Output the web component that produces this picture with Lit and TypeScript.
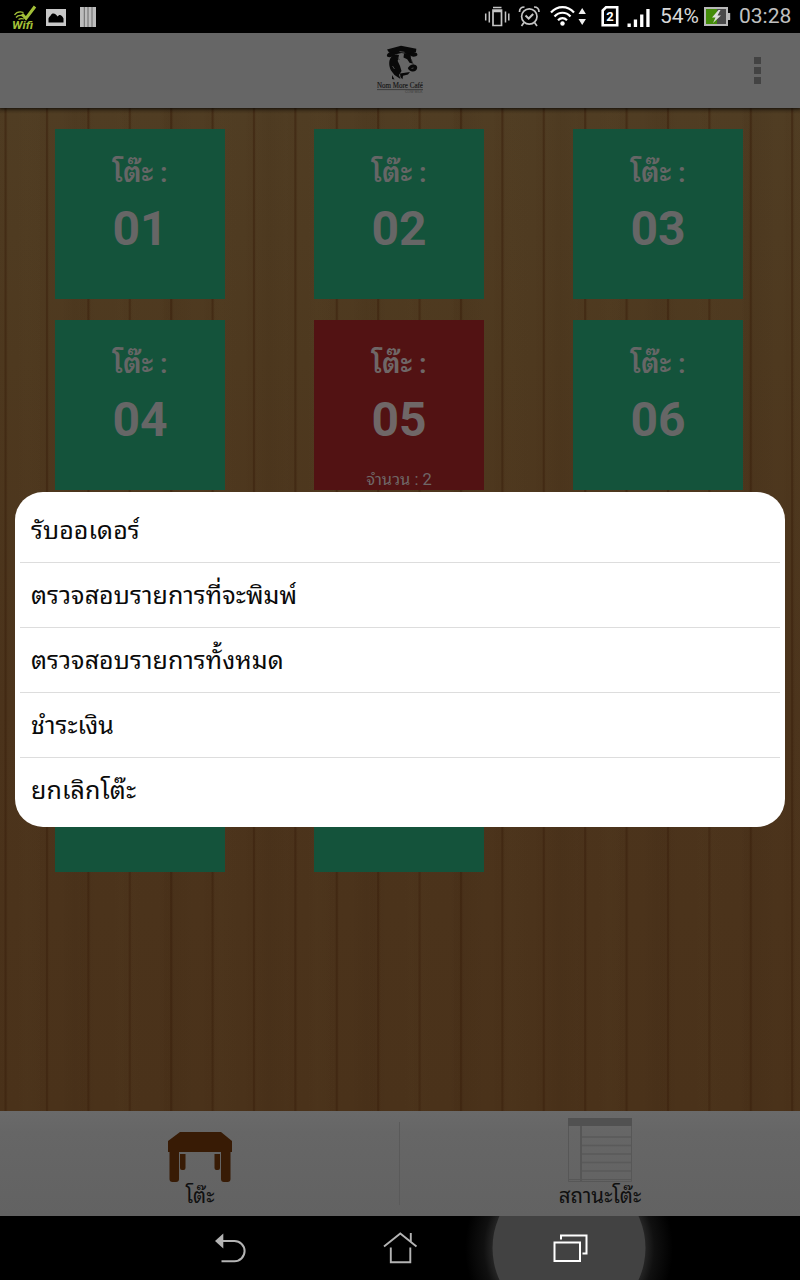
import { LitElement, html, css } from "lit";
import { customElement, property } from "lit/decorators.js";

const FONT = css`Roboto, "Noto Sans Thai Looped", "Noto Looped Thai", Loma, Garuda, Waree, Umpush, "Droid Sans Thai", "Noto Serif Thai", "Noto Sans", sans-serif`;

@customElement("status-bar")
class StatusBar extends LitElement {
  static styles = css`
    :host { display: block; height: 33px; background: #000; }
    .bar { display: flex; align-items: center; height: 33px; font-family: ${FONT}; }
    svg { display: block; flex: none; }
    .pct { width: 44px; font-size: 21px; line-height: 33px; color: #d8d8d8; white-space: nowrap; letter-spacing: -0.1px; }
    .clock { font-size: 21px; line-height: 33px; color: #c0c0c0; white-space: nowrap; }
  `;
  render() {
    return html`<div class="bar">
      <svg width="660" height="33" viewBox="0 0 660 33">
        <g stroke="#a3c038" fill="none">
          <path d="M22 14l4 4.500 9-12" stroke-width="3" />
          <path d="M14.500 15c2-3 6-3.500 9-2.500M16 17.500c2-2.500 5-2.500 7.500-1.500M18.500 19.500c2-1.500 4-1 5.500-.5" stroke-width="1.300" />
        </g>
        <text x="12" y="28.500" font-size="10.500" font-weight="700" font-style="italic" fill="#a3c038" textLength="21" lengthAdjust="spacingAndGlyphs">Wifi</text>
        <path fill="#c8c8c8" fill-rule="evenodd" d="M46 9h20v17H46zM48.500 22.500h15v-4c-1.500-3.500-4-5-6-2-1-2-4.500-5-6.500-1.500-1 1.500-2 2-2.500 3.500z" />
        <path fill="#bdbdbd" d="M80 7h16v20H80z" />
        <path stroke="#555" stroke-width=".8" d="M84.300 7v20M88 7v20M92 7v20" />
        <g fill="none" stroke="#c4c4c4" stroke-width="1.700">
          <path d="M493 10h8.500v15.500H493zM493 7.500h8.500M493.500 11.500h7.500" />
          <path d="M485.700 13.500v7M489.300 11.500v11M505.500 11.500v11M508.800 13.500v7" stroke-width="1.500" />
          <circle cx="529.300" cy="16.500" r="7.700" />
          <path d="M525.500 15.500l3.200 3 4.500-4.500" stroke-width="2" />
          <path d="M519.500 12c0-3 2-5 5-5M539 12c0-3-2-5-5-5M524 22.500l-2.500 3.500M534.500 22.500l2.500 3.500" />
        </g>
        <g fill="none" stroke="#fff" stroke-width="2.200">
          <path d="M551 12.500c6.500-7.200 16.500-7.200 23 0M554.500 16.500c4.500-5 11.500-5 16 0M558 20.300c2.800-2.800 6.200-2.800 9 0" />
        </g>
        <circle cx="562.500" cy="23.500" r="2.200" fill="#fff" />
        <path fill="#eee" d="M582.200 8l3.700 6h-7.400zM582.200 25l3.700-6h-7.400z" />
        <path fill="none" stroke="#fff" stroke-width="2.600" d="M606 7.300h11.200v18H602.700V10.500z" />
        <text x="606.300" y="21.300" font-size="13" font-weight="700" fill="#fff">2</text>
        <path fill="#fff" d="M627.500 23.500h3.300v3.500h-3.300zM633.800 19.500h3.300v7.500h-3.300zM640.100 14.500h3.300V27h-3.300zM646.300 9h3.300v18h-3.300z" />
      </svg>
      <span class="pct">54%</span>
      <svg width="35" height="33" viewBox="704 0 35 33">
        <path fill="#4a4a4a" d="M706 9h20v15h-20z" />
        <path fill="#448c0a" d="M706 9h11v15h-11z" />
        <path fill="none" stroke="#b8b8b8" stroke-width="2" d="M705 8h22v17h-22z" />
        <path fill="#b8b8b8" d="M728 13h2.200v7H728z" />
        <path fill="#ddd" d="M718.500 10l-6.500 7.500h3.500l-2.500 5.500 8-7.500h-3.500l3-5.500z" />
      </svg>
      <span class="clock">03:28</span>
    </div>`;
  }
}

@customElement("app-header")
class AppHeader extends LitElement {
  static styles = css`
    :host { display: grid; grid-template-columns: 1fr 60px 1fr; align-items: start; height: 75px; background: #666; box-shadow: 0 1px 3px rgba(0, 0, 0, 0.6); z-index: 1; }
    .logo { grid-column: 2; padding-top: 10px; overflow: visible; }
    .more { display: grid; gap: 3px; justify-self: end; padding: 24px 39px 0 0; }
    .more i { width: 7px; height: 7px; background: #434343; }
    svg { display: block; }
  `;
  render() {
    return html`
      <svg class="logo" width="60" height="55" viewBox="370 43 60 55">
        <g fill="#090909">
          <path d="M387 49.500l14-3.700 15.300 3-.3 3.200-6.500 2.500-8-1.500-6.500 1.500-6-2z" />
          <path d="M396 53l-5.500-.8c-3 .6-4.500 3-3 4.600 2 1 4.800.2 6.500-1z" />
          <path d="M408 53.500l6-1.300c3.500.3 4.500 2.800 2 4-2 .8-3.500.5-5-.2z" />
          <path d="M390.500 58c1.500-2.500 5-4.500 8.500-3l-1.300 6 2.300 5 1.500 5-2.500 4 1.500 4-6-4-3.500-4.500c-2-4-2.500-9-.5-12.500z" />
          <path d="M404 53.500l6.500.5.500 5 1.500 4.500-3-.8-2.300-3.500-3.700-1.700z" />
          <path d="M409.500 66c3.500-2.500 7.500-1.500 7.700 1.500 0 3-2.700 4.500-5.200 4-2-.4-3.700-1.700-4.200-3.500z" />
          <path d="M400 73.500l10-1.500-2 2.500-5 1.200-.5 3.500-2-2z" />
          <path d="M392 75l2.500 4.500-2.500-.5z" />
        </g>
        <path fill="none" stroke="#202020" stroke-width=".7" d="M397 57.500l2.500 2.500M411 59l2.500 6" />
        <path fill="none" stroke="#666" stroke-width=".7" d="M399.500 51.500l5 .8M411.500 68.500l2-.5M392.500 66l2 3" />
        <text x="377" y="88.300" font-family="Liberation Serif, serif" font-size="8.300" fill="#151515" stroke="#151515" stroke-width=".15" textLength="46" lengthAdjust="spacingAndGlyphs">Nom More Café</text>
        <path stroke="#2b2b2b" stroke-width=".7" d="M377 89.600h46" />
        <text x="405" y="93" font-family="Liberation Sans, sans-serif" font-size="3.500" fill="#3c3c3c">COW MILK</text>
      </svg>
      <div class="more"><i></i><i></i><i></i></div>`;
  }
}

@customElement("table-card")
class TableCard extends LitElement {
  @property() number = "";
  @property() count = "";
  @property({ type: Boolean, reflect: true }) busy = false;
  static styles = css`
    :host { display: flex; flex-direction: column; align-items: center; width: 170px; height: 170px; background: #14533b; color: #666; font-family: ${FONT}; font-weight: 700; }
    :host([busy]) { background: #521213; color: #6f6767; }
    .label { font-size: 28px; line-height: 34px; padding-top: 27px; white-space: nowrap; font-weight: 600; }
    .num { font-size: 48px; line-height: 56px; padding-top: 11px; }
    .count { font-size: 16.500px; font-weight: 400; line-height: 20px; margin-top: auto; white-space: nowrap; }
  `;
  render() {
    if (!this.number) return html``;
    return html`<div class="label">โต๊ะ :</div>
      <div class="num">${this.number}</div>
      ${this.count ? html`<div class="count">จำนวน : ${this.count}</div>` : ""}`;
  }
}

@customElement("action-menu")
class ActionMenu extends LitElement {
  static styles = css`
    :host { display: flex; flex-direction: column; box-sizing: border-box; height: 335px; background: #fff; border-radius: 28px; padding: 6px 5px 4px; font-family: ${FONT}; color: #0a0a0a; }
    .item { box-sizing: border-box; flex: none; height: 65px; padding: 15px 11px 0; font-size: 25px; line-height: 36px; letter-spacing: 0.1px; border-bottom: 1px solid #ddd; white-space: nowrap; }
    .item:last-child { border-bottom: 0; }
  `;
  items = ["รับออเดอร์", "ตรวจสอบรายการที่จะพิมพ์", "ตรวจสอบรายการทั้งหมด", "ชำระเงิน", "ยกเลิกโต๊ะ"];
  render() {
    return this.items.map((t) => html`<div class="item"><span>${t}</span></div>`);
  }
}

@customElement("tab-bar")
class TabBar extends LitElement {
  static styles = css`
    :host { display: grid; grid-template-columns: 1fr 1fr; height: 105px; background: linear-gradient(#6a6a6a, #666 20%, #626262); font-family: ${FONT}; color: #101010; }
    .tab { display: flex; flex-direction: column; align-items: center; padding-top: 7px; }
    .tab:first-child { background: linear-gradient(#5a5a5a, #5a5a5a) right 11px / 1px 83px no-repeat; }
    svg { display: block; }
    .name { font-size: 20.500px; line-height: 28px; white-space: nowrap; }
  `;
  render() {
    return html`
      <div class="tab">
        <svg width="64" height="64" viewBox="0 0 64 64" fill="#381b05">
          <path d="M12 14h41l11 9v11H0V23z" />
          <path d="M1.500 34h9.500v27q0 3-3 3H4.500q-3 0-3-3zM53 34h9.500v27q0 3-3 3H56q-3 0-3-3z" />
          <path d="M12 36h5.500v14q0 2-2 2H14q-2 0-2-2zM46.500 36H52v14q0 2-2 2h-1.500q-2 0-2-2z" />
        </svg>
        <span class="name">โต๊ะ</span>
      </div>
      <div class="tab">
        <svg width="64" height="64" viewBox="0 0 64 64">
          <path fill="#515151" d="M0 0h64v8H0z" />
          <path fill="none" stroke="#575757" d="M.5 8v55.500h63V8M1 61.500h62" />
          <path stroke="#565656" stroke-width="2" d="M13 8v55" />
          <path stroke="#5a5a5a" stroke-width="1.500" d="M14 19h49M14 27.500h49M14 36h49M14 44.500h49M14 53h49" />
        </svg>
        <span class="name">สถานะโต๊ะ</span>
      </div>`;
  }
}

@customElement("nav-bar")
class NavBar extends LitElement {
  static styles = css`
    :host { display: block; height: 64px; background: #000; overflow: hidden; }
    svg { display: block; }
  `;
  render() {
    return html`<svg width="800" height="64" viewBox="0 1216 800 64" fill="none">
      <defs>
        <radialGradient id="glow" gradientUnits="userSpaceOnUse" cx="569" cy="1248" r="104">
          <stop offset=".73" stop-color="#262626" /><stop offset=".82" stop-color="#101010" /><stop offset="1" stop-color="#000" />
        </radialGradient>
      </defs>
      <circle cx="569" cy="1248" r="104" fill="url(#glow)" />
      <circle cx="569" cy="1248" r="76.500" fill="#424242" />
      <path fill="#b4b4b4" d="M215 1241l8.300-7.500v15z" />
      <path stroke="#b4b4b4" stroke-width="2" d="M222 1241h12.500a10 10 0 0 1 0 20.200H221.500" />
      <path stroke="#b4b4b4" stroke-width="1.900" d="M384 1246.500l16.300-13 16.200 13M390.800 1247.500v14.800h19.500v-14.800M410.800 1233v8.500" />
      <path stroke="#fff" stroke-width="2" d="M554.500 1242.500h25.500v18.500h-25.500zM561 1239.500v-4h25.500v18h-4" />
    </svg>`;
  }
}

@customElement("app-root")
class AppRoot extends LitElement {
  static styles = css`
    :host { display: flex; flex-direction: column; position: relative; width: 800px; height: 1280px; overflow: hidden; background: #000; }
    .floor {
      flex: 1; box-sizing: border-box; display: grid; grid-template-columns: repeat(3, 170px); grid-auto-rows: 170px;
      column-gap: 89px; row-gap: 21.200px; align-content: start; padding: 20.500px 0 0 55px;
      background:
        linear-gradient(rgba(0,0,0,.25), transparent 6px),
        repeating-linear-gradient(90deg, transparent 0 17px, rgba(90,70,40,.08) 26px, transparent 44px 61px, rgba(40,20,5,.06) 75px, transparent 97px),
        repeating-linear-gradient(90deg, rgba(58,32,12,.05) 0 4px, rgba(58,32,12,.55) 5px 6px, rgba(58,32,12,.08) 7.200px, transparent 8.500px 38px, rgba(58,32,12,.05) 41.400px),
        linear-gradient(#503d23, #4e391f 25%, #4c341c 60%, #4a321a);
    }
    .overlay { position: absolute; left: 15px; right: 15px; top: 492px; }
  `;
  tables = ["01", "02", "03", "04", "05", "06", "", "", "", "", ""];
  render() {
    return html`
      <status-bar></status-bar>
      <app-header></app-header>
      <main class="floor">
        ${this.tables.map((n) => html`<table-card number=${n} ?busy=${n === "05"} count=${n === "05" ? "2" : ""}></table-card>`)}
      </main>
      <tab-bar></tab-bar>
      <nav-bar></nav-bar>
      <action-menu class="overlay"></action-menu>`;
  }
}
